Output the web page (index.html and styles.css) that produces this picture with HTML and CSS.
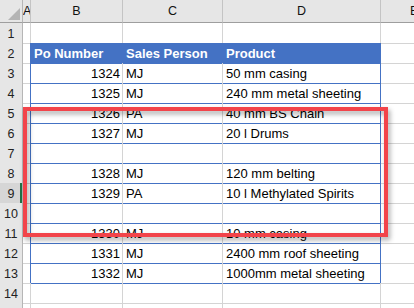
FILE: index.html
```html
<!DOCTYPE html>
<html>
<head>
<meta charset="utf-8">
<link rel="stylesheet" href="styles.css">
</head>
<body>
<div class="sheet">
  <div class="row head">
    <div class="corner"><svg width="22" height="22" viewBox="0 0 22 22"><polygon points="20,8 20,20 8,20" fill="#b4b4b4"/></svg></div>
    <div class="ch">A</div>
    <div class="ch">B</div>
    <div class="ch">C</div>
    <div class="ch">D</div>
    <div class="ch e">E</div>
  </div>
  <div class="row"><div class="rh">1</div><div class="c"></div><div class="c"></div><div class="c"></div><div class="c"></div><div class="c"></div></div>
  <div class="row thead"><div class="rh">2</div><div class="c a"></div><div class="c b">Po Number</div><div class="c cc">Sales Person</div><div class="c d">Product</div><div class="c"></div></div>
  <div class="row tr"><div class="rh">3</div><div class="c a"></div><div class="c b num">1324</div><div class="c cc">MJ</div><div class="c d">50 mm casing</div><div class="c"></div></div>
  <div class="row tr"><div class="rh">4</div><div class="c a"></div><div class="c b num">1325</div><div class="c cc">MJ</div><div class="c d">240 mm metal sheeting</div><div class="c"></div></div>
  <div class="row tr"><div class="rh">5</div><div class="c a"></div><div class="c b num">1326</div><div class="c cc">PA</div><div class="c d">40 mm BS Chain</div><div class="c"></div></div>
  <div class="row tr"><div class="rh">6</div><div class="c a"></div><div class="c b num">1327</div><div class="c cc">MJ</div><div class="c d">20 l Drums</div><div class="c"></div></div>
  <div class="row tr"><div class="rh">7</div><div class="c a"></div><div class="c b num"></div><div class="c cc"></div><div class="c d"></div><div class="c"></div></div>
  <div class="row tr"><div class="rh">8</div><div class="c a"></div><div class="c b num">1328</div><div class="c cc">MJ</div><div class="c d">120 mm belting</div><div class="c"></div></div>
  <div class="row tr"><div class="rh active">9</div><div class="c a"></div><div class="c b num">1329</div><div class="c cc">PA</div><div class="c d">10 l Methylated Spirits</div><div class="c"></div></div>
  <div class="row tr"><div class="rh">10</div><div class="c a"></div><div class="c b num"></div><div class="c cc"></div><div class="c d"></div><div class="c"></div></div>
  <div class="row tr"><div class="rh">11</div><div class="c a"></div><div class="c b num">1330</div><div class="c cc">MJ</div><div class="c d">10 mm casing</div><div class="c"></div></div>
  <div class="row tr"><div class="rh">12</div><div class="c a"></div><div class="c b num">1331</div><div class="c cc">MJ</div><div class="c d">2400 mm roof sheeting</div><div class="c"></div></div>
  <div class="row tr"><div class="rh">13</div><div class="c a"></div><div class="c b num">1332</div><div class="c cc">MJ</div><div class="c d">1000mm metal sheeting</div><div class="c"></div></div>
  <div class="row"><div class="rh">14</div><div class="c"></div><div class="c"></div><div class="c"></div><div class="c"></div><div class="c"></div></div>
  <div class="row"><div class="rh"></div><div class="c"></div><div class="c"></div><div class="c"></div><div class="c"></div><div class="c"></div></div>
  <div class="highlight"></div>
</div>
</body>
</html>
```
FILE: styles.css
```css
* { box-sizing: border-box; }
html, body { margin: 0; padding: 0; background: #fff; }
body { width: 414px; height: 308px; overflow: hidden; }
.sheet {
  position: relative;
  font-family: "Liberation Sans", Arial, sans-serif;
  font-size: 13px;
  color: #000;
}
.row {
  display: grid;
  grid-template-columns: 23px 8px 92px 100px 158px 60px;
  height: 20px;
}
.row.head { height: 23px; }
.corner {
  background: #e6e6e6;
  border-right: 1px solid #b6b6b6;
  border-bottom: 1px solid #9e9e9e;
  line-height: 0;
}
.ch {
  background: #e6e6e6;
  border-right: 1px solid #c4c4c4;
  border-bottom: 1px solid #9e9e9e;
  text-align: center;
  font-size: 12.5px;
  line-height: 23px;
  color: #111;
  overflow: hidden;
}
.ch.e { text-align: left; padding-left: 29px; }
.rh {
  background: #e6e6e6;
  border-right: 1px solid #b6b6b6;
  border-bottom: 1px solid #cfcfcf;
  text-align: center;
  font-size: 12.5px;
  line-height: 18px;
  padding-top: 2px;
  color: #222;
}
.rh.active {
  background: #d6d6d6;
  box-shadow: inset -2px 0 0 #217346;
}
.c {
  border-right: 1px solid #d4d4d4;
  border-bottom: 1px solid #d4d4d4;
  line-height: 18px;
  padding: 2px 2px 0 3px;
  white-space: nowrap;
  overflow: visible;
}
.num { text-align: right; padding-right: 2px; }
.thead .a, .tr .a { border-right-color: #4472c4; }
.thead .d, .tr .d { border-right-color: #4472c4; }
.thead .b, .thead .cc, .thead .d {
  background: #4472c4;
  color: #fff;
  font-weight: bold;
  border-bottom-color: #4472c4;
}
.thead .b, .thead .cc { border-right-color: #4472c4; }
.tr .b, .tr .cc, .tr .d { border-bottom-color: #4472c4; }
.highlight {
  position: absolute;
  left: 23px;
  top: 107px;
  width: 365px;
  height: 130px;
  border: 4px solid #f2444a;
  filter: drop-shadow(2px 3px 2.5px rgba(0, 0, 0, 0.35));
  pointer-events: none;
}
```
